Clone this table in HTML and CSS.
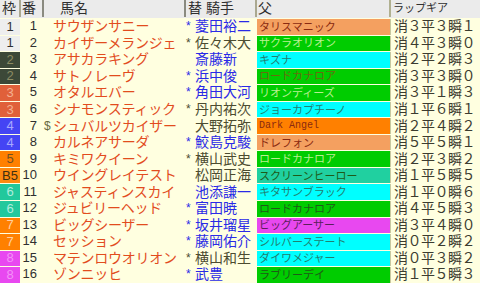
FILE: index.html
```html
<!DOCTYPE html>
<html lang="ja">
<head>
<meta charset="utf-8">
<link rel="stylesheet" href="styles.css">
</head>
<body>
<div class="table">
  <div class="row head">
    <div class="h h-waku">枠</div>
    <div class="h h-ban">番</div>
    <div class="h h-name">馬名</div>
    <div class="h h-jockey">替 騎手</div>
    <div class="h h-sire">父</div>
    <div class="h h-lap">ラップギア</div>
  </div>

  <div class="row"><div class="waku w1">1</div><div class="ban">1</div><div class="name"><span class="mk"></span>サウザンサニー</div><div class="jk blue"><span class="mk">*</span>菱田裕二</div><div class="sire s-salmon t-red">タリスマニック</div><div class="lap">消３平３瞬１</div></div>
  <div class="row"><div class="waku w1">1</div><div class="ban">2</div><div class="name"><span class="mk"></span>カイザーメランジェ</div><div class="jk dark"><span class="mk">*</span>佐々木大</div><div class="sire s-green t-light">サクラオリオン</div><div class="lap">消４平３瞬０</div></div>
  <div class="row"><div class="waku w2">2</div><div class="ban">3</div><div class="name"><span class="mk"></span>アサカラキング</div><div class="jk blue"><span class="mk"></span>斎藤新</div><div class="sire s-cyan t-teal">キズナ</div><div class="lap">消２平２瞬３</div></div>
  <div class="row"><div class="waku w2">2</div><div class="ban">4</div><div class="name"><span class="mk"></span>サトノレーヴ</div><div class="jk blue"><span class="mk">*</span>浜中俊</div><div class="sire s-green t-olive">ロードカナロア</div><div class="lap">消３平３瞬０</div></div>
  <div class="row"><div class="waku w3">3</div><div class="ban">5</div><div class="name"><span class="mk"></span>オタルエバー</div><div class="jk blue"><span class="mk">*</span>角田大河</div><div class="sire s-green t-light">リオンディーズ</div><div class="lap">消３平１瞬３</div></div>
  <div class="row"><div class="waku w3">3</div><div class="ban">6</div><div class="name"><span class="mk"></span>シナモンスティック</div><div class="jk dark"><span class="mk">*</span>丹内祐次</div><div class="sire s-cyan t-teal">ジョーカプチーノ</div><div class="lap">消１平６瞬１</div></div>
  <div class="row"><div class="waku w4">4</div><div class="ban">7</div><div class="name"><span class="mk dollar">$</span>シュバルツカイザー</div><div class="jk dark"><span class="mk"></span>大野拓弥</div><div class="sire s-orange t-red latin">Dark Angel</div><div class="lap">消２平４瞬２</div></div>
  <div class="row"><div class="waku w4">4</div><div class="ban">8</div><div class="name"><span class="mk"></span>カルネアサーダ</div><div class="jk blue"><span class="mk">*</span>鮫島克駿</div><div class="sire s-salmon t-red">ドレフォン</div><div class="lap">消５平５瞬１</div></div>
  <div class="row"><div class="waku w5">5</div><div class="ban">9</div><div class="name"><span class="mk"></span>キミワクイーン</div><div class="jk dark"><span class="mk">*</span>横山武史</div><div class="sire s-green t-light">ロードカナロア</div><div class="lap">消２平３瞬２</div></div>
  <div class="row"><div class="waku w5b">B5</div><div class="ban">10</div><div class="name"><span class="mk"></span>ウイングレイテスト</div><div class="jk dark"><span class="mk"></span>松岡正海</div><div class="sire s-teal t-dgreen">スクリーンヒーロー</div><div class="lap">消１平５瞬５</div></div>
  <div class="row"><div class="waku w6">6</div><div class="ban">11</div><div class="name"><span class="mk"></span>ジャスティンスカイ</div><div class="jk blue"><span class="mk"></span>池添謙一</div><div class="sire s-cyan t-teal">キタサンブラック</div><div class="lap">消１平０瞬６</div></div>
  <div class="row"><div class="waku w6">6</div><div class="ban">12</div><div class="name"><span class="mk"></span>ジュビリーヘッド</div><div class="jk blue"><span class="mk">*</span>富田暁</div><div class="sire s-green t-dgreen">ロードカナロア</div><div class="lap">消４平５瞬３</div></div>
  <div class="row"><div class="waku w7">7</div><div class="ban">13</div><div class="name"><span class="mk"></span>ビッグシーザー</div><div class="jk blue"><span class="mk">*</span>坂井瑠星</div><div class="sire s-magenta t-purple">ビッグアーサー</div><div class="lap">消３平４瞬０</div></div>
  <div class="row"><div class="waku w7">7</div><div class="ban">14</div><div class="name"><span class="mk"></span>セッション</div><div class="jk blue"><span class="mk">*</span>藤岡佑介</div><div class="sire s-cyan t-teal">シルバーステート</div><div class="lap">消０平２瞬２</div></div>
  <div class="row"><div class="waku w8">8</div><div class="ban">15</div><div class="name"><span class="mk"></span>マテンロウオリオン</div><div class="jk dark"><span class="mk">*</span>横山和生</div><div class="sire s-cyan t-teal">ダイワメジャー</div><div class="lap">消０平３瞬２</div></div>
  <div class="row"><div class="waku w8">8</div><div class="ban">16</div><div class="name"><span class="mk"></span>ゾンニッヒ</div><div class="jk blue"><span class="mk">*</span>武豊</div><div class="sire s-green t-dgreen">ラブリーデイ</div><div class="lap">消１平５瞬３</div></div>
</div>
</body>
</html>
```

FILE: styles.css
```css
html, body {
  margin: 0;
  padding: 0;
  background: #ffffe0;
}

body {
  width: 480px;
  height: 283px;
  overflow: hidden;
  font-family: "Liberation Sans", "Noto Sans CJK JP", sans-serif;
  font-size: 14px;
  color: #303030;
}

.table {
  display: flex;
  flex-direction: column;
}

.row {
  display: grid;
  grid-template-columns: 21px 23px 142px 71px 134px 89px;
  height: 16.56px;
  align-items: stretch;
}

.row.head {
  height: 18px;
  background: #ebebeb;
}

.h {
  display: flex;
  align-items: center;
  line-height: 15px;
  height: 17px;
  border-right: 2px solid #aaa890;
  box-sizing: border-box;
  color: #303030;
  font-size: 14px;
}

.h-waku { padding-left: 2px; }
.h-ban { padding-left: 1px; border-right-color: #8a8a80; }
.h-name { padding-left: 16px; border-right-color: #8a8a80; }
.h-jockey { padding-left: 2px; white-space: pre; }
.h-sire { padding-left: 1px; border-right-color: #b0b090; }
.h-lap { padding-left: 2px; font-size: 11px; border-right: none; }

.row > div:not(.h) {
  display: flex;
  align-items: center;
  line-height: 14px;
  white-space: nowrap;
  min-width: 0;
}

.waku {
  justify-content: center;
  margin: 1px 1px 0 0;
  font-size: 13px;
}

.w1 { background: #eeeeee; color: #303030; }
.w2 { background: #3c4838; color: #8c8c64; }
.w3 { background: #e0603a; color: #f4b090; }
.w4 { background: #4444f4; color: #a8a8ff; }
.w5 { background: #ff8000; color: #705020; }
.w5b { background: #ff8a10; color: #403010; justify-content: flex-start !important; padding-left: 2px; }
.w6 { background: #22c89c; color: #b0ecdc; }
.w7 { background: #ff8000; color: #ffd0a0; }
.w8 { background: #e848f0; color: #f490f8; }

.ban {
  justify-content: flex-end;
  padding-right: 7px;
  font-size: 13px;
  color: #303030;
}

.name {
  color: #e24c1e;
  letter-spacing: -0.25px;
}

.mk {
  display: inline-block;
  width: 9px;
  flex: none;
  font-size: 12px;
  letter-spacing: 0;
}

.dollar { color: #6a6a40; }

.jk.blue { color: #2a2ae6; }
.jk.dark { color: #4c4c30; }

.sire {
  margin-top: 1px;
  padding-left: 2px;
  font-size: 11px;
  border-right: 1px solid #c8c8a0;
}

.latin {
  font-family: "Liberation Mono", monospace;
  font-size: 10px;
}

.s-salmon { background: #f4a060; }
.s-green { background: #00cc00; }
.s-cyan { background: #00ffff; }
.s-orange { background: #ff8000; }
.s-teal { background: #20d0a0; }
.s-magenta { background: #e848f0; }

.t-red { color: #8a2a10; }
.t-light { color: #b8f090; }
.t-teal { color: #208070; }
.t-olive { color: #6a6a10; }
.t-dgreen { color: #1e5a18; }
.t-purple { color: #5a205a; }

.lap {
  padding-left: 3px;
  color: #3c3c30;
  letter-spacing: -0.5px;
}
```
